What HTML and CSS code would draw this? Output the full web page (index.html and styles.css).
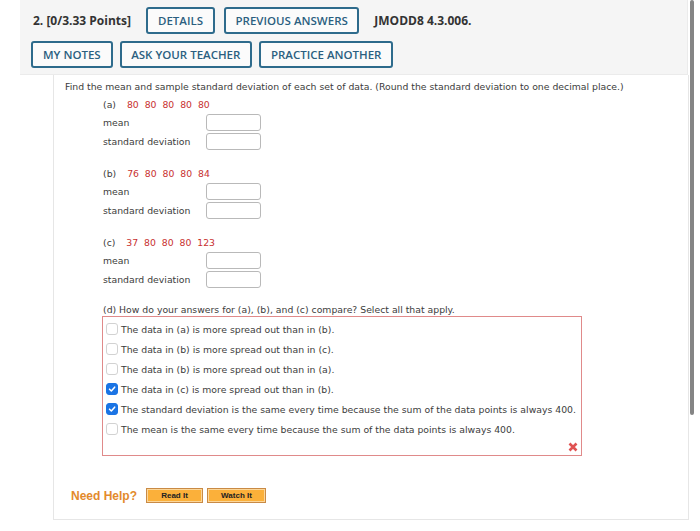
FILE: index.html
```html
<!DOCTYPE html>
<html lang="en">
<head>
    <meta charset="UTF-8">
    <meta name="viewport" content="width=device-width, initial-scale=1.0">
    <link rel="stylesheet" href="styles.css">
    <title>JMODD8 4.3.006</title>
</head>
<body>
    <div class="page">

        <div class="head">
            <div class="head-row">
                <span class="points">2. [0/3.33 Points]</span>
                <a class="btn details">DETAILS</a>
                <a class="btn">PREVIOUS ANSWERS</a>
                <span class="qid">JMODD8 4.3.006.</span>
            </div>
            <div class="head-row second">
                <a class="btn wide">MY NOTES</a>
                <a class="btn">ASK YOUR TEACHER</a>
                <a class="btn wide">PRACTICE ANOTHER</a>
            </div>
        </div>

        <div class="question">
            <p class="intro">Find the mean and sample standard deviation of each set of data. (Round the standard deviation to one decimal place.)</p>

            <div class="part">
                <div class="part-label">(a) <span class="data">80&nbsp; 80&nbsp; 80&nbsp; 80&nbsp; 80</span></div>
                <div class="field"><span>mean</span><span class="box"></span></div>
                <div class="field"><span>standard deviation</span><span class="box"></span></div>
            </div>

            <div class="part">
                <div class="part-label">(b) <span class="data">76&nbsp; 80&nbsp; 80&nbsp; 80&nbsp; 84</span></div>
                <div class="field"><span>mean</span><span class="box"></span></div>
                <div class="field"><span>standard deviation</span><span class="box"></span></div>
            </div>

            <div class="part">
                <div class="part-label">(c) <span class="data">37&nbsp; 80&nbsp; 80&nbsp; 80&nbsp; 123</span></div>
                <div class="field"><span>mean</span><span class="box"></span></div>
                <div class="field"><span>standard deviation</span><span class="box"></span></div>
            </div>

            <div class="part part-d">
                <p class="part-q">(d) How do your answers for (a), (b), and (c) compare? Select all that apply.</p>
                <div class="choices">
                    <div class="choice"><span class="check"></span>The data in (a) is more spread out than in (b).</div>
                    <div class="choice"><span class="check"></span>The data in (b) is more spread out than in (c).</div>
                    <div class="choice"><span class="check"></span>The data in (b) is more spread out than in (a).</div>
                    <div class="choice"><span class="check on"><svg viewBox="0 0 12 12"><path d="M3 6.2 L5.2 8.4 L9.2 3.8" /></svg></span>The data in (c) is more spread out than in (b).</div>
                    <div class="choice"><span class="check on"><svg viewBox="0 0 12 12"><path d="M3 6.2 L5.2 8.4 L9.2 3.8" /></svg></span>The standard deviation is the same every time because the sum of the data points is always 400.</div>
                    <div class="choice"><span class="check"></span>The mean is the same every time because the sum of the data points is always 400.</div>
                    <div class="wrong">
                        <svg viewBox="0 0 12 12"><path d="M2.5 2.5 L9.5 9.5 M9.5 2.5 L2.5 9.5" /></svg>
                    </div>
                </div>
            </div>

            <div class="help">
                <span class="help-title">Need Help?</span>
                <a class="help-btn">Read It</a>
                <a class="help-btn watch">Watch It</a>
            </div>
        </div>

    </div>
    <div class="scrollbar"></div>
</body>
</html>
```

FILE: styles.css
```css
*{
    margin: 0;
    padding: 0;
    box-sizing: border-box;
}

body{
    background: #ffffff;
    width: 700px;
    height: 531px;
    overflow: hidden;
    position: relative;
}

.page{
    margin-left: 20px;
    width: 668px;
}

/* header bar */

.head{
    background: #f5f5f5;
    border-bottom: 1px solid #ebebeb;
    border-right: 1px solid #ebebeb;
    height: 75px;
    padding: 7px 0 0 11px;
    display: flex;
    flex-direction: column;
    gap: 7px;
    font-family: "Open Sans", sans-serif;
}

.head-row{
    display: flex;
    align-items: center;
    gap: 9px;
}

.head-row.second{
    gap: 7px;
}

.points, .qid{
    font-weight: 700;
    font-size: 12px;
    color: #333333;
}

.points{
    margin-left: 2px;
}

.details{
    margin-left: 6px;
}

.qid{
    margin-left: 6px;
}

.btn{
    display: flex;
    align-items: center;
    height: 27px;
    padding: 0 9.5px;
    border: 2px solid #2e6b8c;
    border-radius: 3px;
    background: #fbfbfb;
    color: #2b5f80;
    font-size: 11.5px;
    font-weight: 600;
}

.btn.details, .btn.wide{
    padding: 0 10px;
}

/* question body */

.question{
    margin-left: 33px;
    width: 636px;
    height: 445px;
    border-left: 1px solid #e6e6e6;
    border-right: 1px solid #e6e6e6;
    border-bottom: 1px solid #e6e6e6;
    padding: 5px 0 0 11px;
    font-family: "DejaVu Sans", Verdana, sans-serif;
    font-size: 9.3px;
    color: #3c3c3c;
}

.intro{
    line-height: 14px;
}

.part{
    margin: 4px 0 0 38px;
}

.part + .part{
    margin-top: 16px;
}

.part-label{
    line-height: 14px;
    margin-bottom: 1px;
}

.data{
    color: #c8302f;
    margin-left: 8px;
}

.field{
    display: grid;
    grid-template-columns: 103px 55px;
    align-items: center;
    height: 19px;
}

.box{
    display: block;
    height: 17px;
    border: 1px solid #b9b9b9;
    border-radius: 3px;
    background: #ffffff;
}

.part + .part-d{
    margin-top: 15px;
}

.part-d .part-q{
    line-height: 12px;
}

.choices{
    margin: 0 0 0 -1px;
    width: 480px;
    border: 1px solid #e08a8a;
    padding: 2px 0 0 3px;
    height: 140px;
    position: relative;
}

.choice{
    display: flex;
    align-items: center;
    height: 20px;
    gap: 3px;
    white-space: nowrap;
}

.check{
    width: 12px;
    height: 12px;
    border: 1px solid #d2d2d2;
    border-radius: 3px;
    background: #ffffff;
    display: flex;
    flex: none;
}

.check.on{
    background: #1b74e4;
    border-color: #1b74e4;
}

.check svg{
    width: 100%;
    height: 100%;
}

.check svg path{
    fill: none;
    stroke: #ffffff;
    stroke-width: 1.8;
    stroke-linecap: round;
    stroke-linejoin: round;
}

.wrong{
    position: absolute;
    right: 2px;
    bottom: 2px;
    width: 12px;
    height: 12px;
}

.wrong svg path{
    fill: none;
    stroke: #e05252;
    stroke-width: 2.6;
}

/* need help */

.help{
    display: flex;
    align-items: center;
    margin: 32px 0 0 6px;
    gap: 4px;
}

.help-title{
    font-family: "Liberation Sans", Arial, sans-serif;
    font-weight: bold;
    font-size: 12px;
    color: #e38a2c;
    margin-right: 5px;
}

.help-btn{
    display: flex;
    align-items: center;
    justify-content: center;
    width: 57px;
    height: 15px;
    background: #fbb03a;
    border: 1px solid #c98a45;
    box-shadow: inset 0 0 0 1px #fcd79a;
    font-family: "Liberation Sans", Arial, sans-serif;
    font-weight: bold;
    font-size: 8px;
    color: #222222;
}

.help-btn.watch{
    width: 59px;
}

.scrollbar{
    position: absolute;
    left: 690px;
    top: 0;
    width: 4px;
    height: 415px;
    background: #858585;
    border-radius: 2px;
}
```
